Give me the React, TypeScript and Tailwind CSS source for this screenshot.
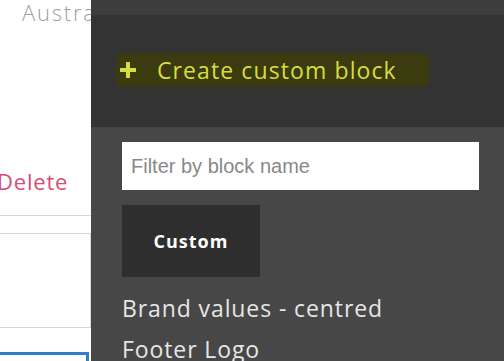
import React from 'react';

const blocks = ['Brand values - centred', 'Footer Logo'];

const App: React.FC = () => {
  return (
    <div className="w-[504px] h-[361px] flex overflow-hidden bg-white">
      {/* page behind the drawer */}
      <div className="w-[91px] shrink-0 flex flex-col overflow-hidden whitespace-nowrap">
        <div className="h-[36px] pl-[22px] text-[22px] leading-[24px] tracking-[1.8px] text-[#a0a0a0] font-light font-['Open_Sans',sans-serif]">
          Australia
        </div>
        <div className="h-[132px]" />
        <div className="h-[28px] -ml-[3px] text-[22px] leading-[26px] tracking-[0.8px] text-[#d64d73] font-['Open_Sans',sans-serif]">
          Delete
        </div>
        <div className="h-[19px]" />
        <div className="h-px bg-[#d8d8d8]" />
        <div className="h-[17px]" />
        <div className="h-[95px] border border-l-0 border-[#d8d8d8]" />
        <div className="h-[24px]" />
        <div className="h-[3px] bg-[#2f7fc6] mr-[2px] relative">
          <div className="absolute right-0 top-0 w-[3px] h-[10px] bg-[#2f7fc6]" />
        </div>
      </div>

      {/* block drawer */}
      <div className="flex-1 flex flex-col bg-[#474747] overflow-hidden">
        <div className="h-[15px] shrink-0 bg-[#3d3d3d]" />
        <div className="h-[112px] shrink-0 bg-[#333333] flex items-center pl-[27px] pb-[2px]">
          <div className="flex items-center gap-[20px] h-[30px] pr-[30px] pl-[1px] rounded-[4px] bg-[#3b3b0f] shadow-[0_0_3px_2px_#3b3b0f]">
            <svg width="18" height="18" viewBox="0 0 18 18" className="shrink-0">
              <path d="M9 1v16M1 9h16" stroke="#d6de3c" strokeWidth="4" />
            </svg>
            <span className="text-[23px] leading-[28px] tracking-[1.1px] text-[#d6de3c] font-['Open_Sans',sans-serif]">
              Create custom block
            </span>
          </div>
        </div>
        <div className="shrink-0 flex flex-col pl-[31px] pr-[25px] pt-[15px]">
          <input
            type="text"
            placeholder="Filter by block name"
            className="h-[48px] w-full bg-white px-[9px] text-[20px] text-[#333] placeholder:text-[#888] outline-none font-['Liberation_Sans',Arial,sans-serif]"
          />
          <div className="mt-[15px] w-[138px] h-[72px] bg-[#2e2e2e] flex items-center justify-center text-[18px] tracking-[1px] font-bold text-white font-['Open_Sans',sans-serif]">
            Custom
          </div>
          <div className="mt-[17px] flex flex-col gap-[13px]">
            {blocks.map((b) => (
              <div key={b} className="text-[23px] leading-[28px] tracking-[0.9px] text-[#e6e6e6] font-['Open_Sans',sans-serif] whitespace-nowrap">
                {b}
              </div>
            ))}
          </div>
        </div>
      </div>
    </div>
  );
};

export default App;
